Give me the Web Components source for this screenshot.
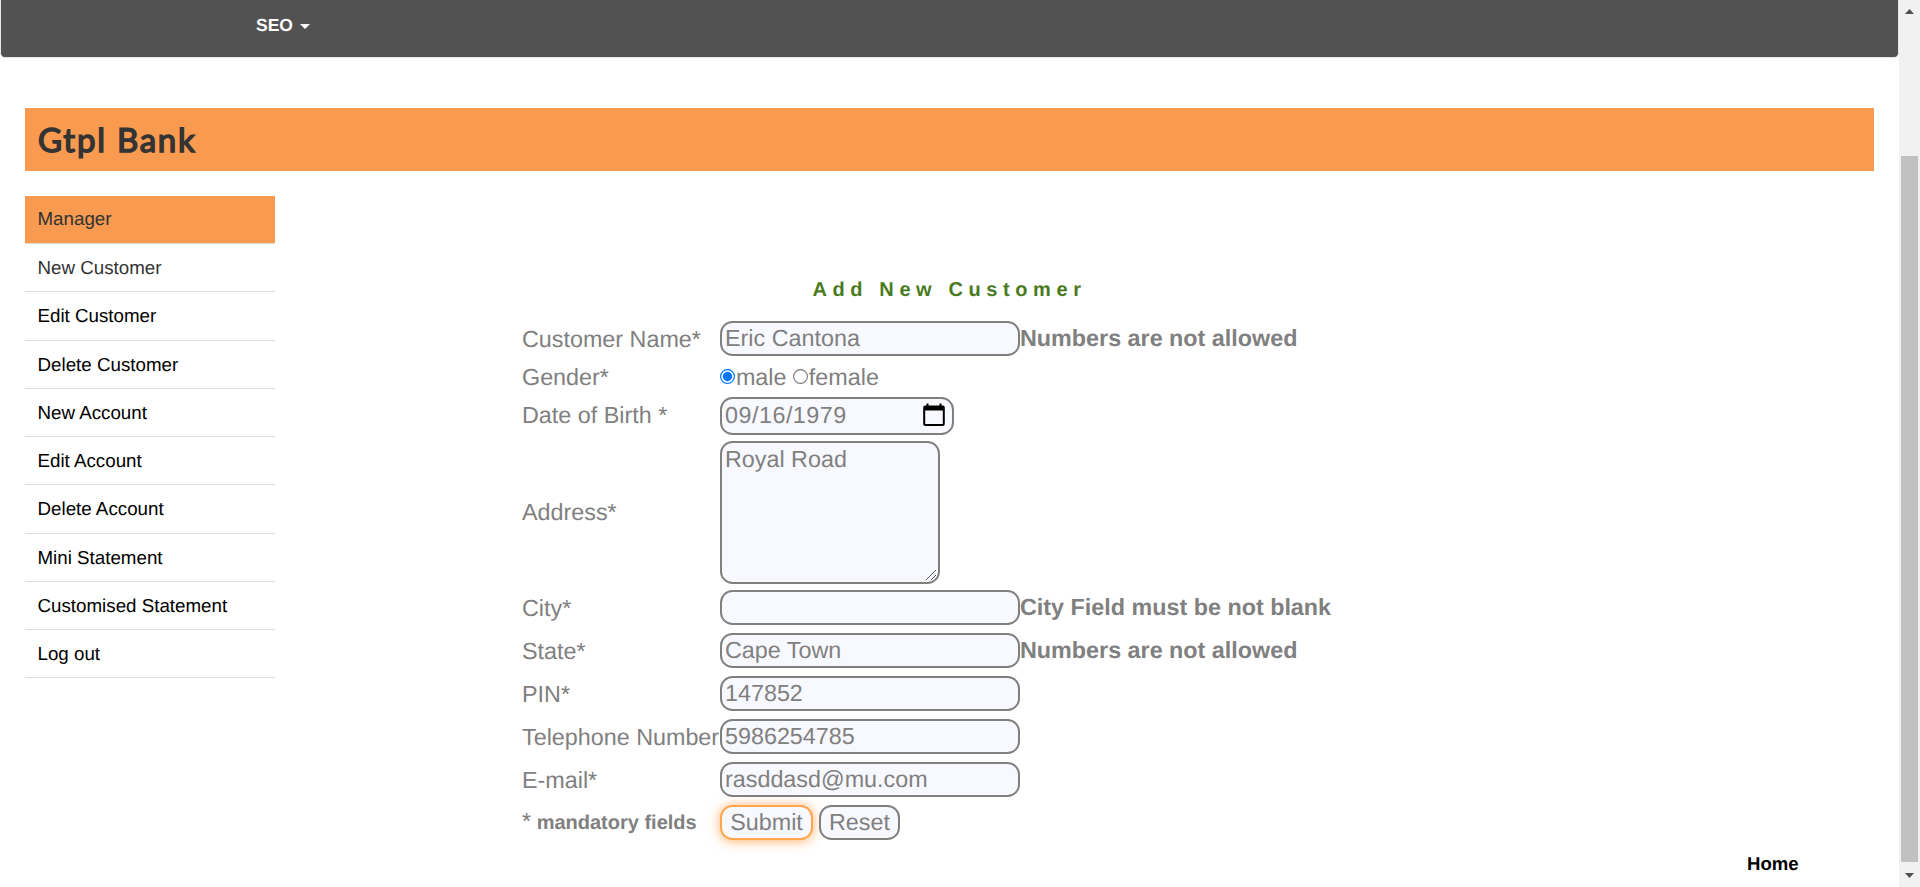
<!DOCTYPE html>
<html lang="en">
<head>
<meta charset="utf-8">
<title>Gtpl Bank New Customer Entry Page</title>
<style>
html,body{margin:0;height:100%;overflow:hidden;background:#fff}
body{font-family:"Liberation Sans",Arial,sans-serif;text-rendering:geometricPrecision}
</style>
</head>
<body>
<bank-app></bank-app>
<script>
const define=(name,html)=>customElements.define(name,class extends HTMLElement{
  constructor(){super();this.attachShadow({mode:'open'}).innerHTML=html;}
});

define('nav-bar',`<style>
:host{display:block;box-sizing:border-box;height:58px;margin:0;border:1px solid #e7e7e7;border-top:0;border-radius:0 0 5px 5px;background:#525252;color:#fff}
a{display:flex;align-items:center;gap:7px;padding:15px 0 0 255px;font-weight:bold;font-size:17.5px;line-height:20px}
i{border:5px solid transparent;border-top-color:#fff;border-bottom:0;margin-top:3px}
</style><a><span><slot></slot></span><i></i></a>`);

define('bank-title',`<style>
:host{display:flex;align-items:center;box-sizing:border-box;margin:50px 25px 0;height:63px;padding:0 0 0 13px;background:#f89a50;color:#333}
h2{margin:0;font:400 33px/40px Lato,sans-serif;letter-spacing:1.75px;-webkit-text-stroke:1.5px #333}
</style><h2><slot></slot></h2>`);

define('menu-item',`<style>
:host{display:block;box-sizing:border-box;height:48.22px;padding:10px 12.5px;border-bottom:1px solid #ddd;font-size:18.75px;line-height:27px;color:#000;white-space:nowrap}
:host([active]){background:#f89a50;color:#333;line-height:26.6px}
:host([hover]){color:#333}
</style><slot></slot>`);

define('side-menu',`<style>:host{display:block;width:250px;flex:none}</style><slot></slot>`);

define('form-row',`<style>
:host{display:grid;grid-template-columns:198px auto 1fr;align-items:center;height:43px;font-size:23.33px;line-height:27px;color:gray;white-space:nowrap}
:host([kind=radio]){height:32px}
:host([kind=date]){height:44px}
:host([kind=area]){height:150px}
.l{padding-top:1px}
:host([kind=radio]) .l{padding-top:2px}
:host([kind=date]) .l{padding-top:2px}
:host([kind=area]) .l{padding-top:3px}
b{font-weight:bold}
</style><span class="l"><slot name="label"></slot></span><slot></slot><b><slot name="message"></slot></b>`);

define('text-box',`<style>
:host{display:flex;box-sizing:border-box;width:300px;height:35px;border:2px solid gray;border-radius:12.5px;background:#f8f8ff;padding:2px 3px 0 3px;line-height:27px;position:relative}
:host([kind=date]){width:234px;height:38px;margin-top:4px;padding-top:3px;justify-content:space-between;letter-spacing:.5px}
:host([kind=area]){width:220px;height:143px;margin-top:3px;padding-top:3px}
svg{display:none}
:host([kind=date]) .cal{display:block;margin:1px 4px 0 0}
:host([kind=area]) .grip{display:block;position:absolute;right:1px;bottom:1px}
</style><slot></slot>
<svg class="cal" width="22" height="24" viewBox="0 0 22 24"><path d="M2.2 2.5h17.6q2 0 2 2v16.500q0 2-2 2h-17.6q-2 0-2-2v-16.500q0-2 2-2zM2.200 7.500v13.500h17.600v-13.500z" fill="#000" fill-rule="evenodd"/><path d="M4.500 0.500v3M17.500 .5v3" stroke="#000" stroke-width="2"/></svg>
<svg class="grip" width="12" height="12" viewBox="0 0 12 12"><path d="M1 11L11 1M6 11L11 6" stroke="#555" stroke-width="1"/></svg>`);

define('gender-choice',`<style>
:host{display:flex;align-items:center;padding-top:2px}
svg{width:15px;height:15px;margin:-1px .9px 0 0}
span+svg{margin-left:6.5px}
</style><svg viewBox="0 0 15 15"><circle cx="7.5" cy="7.5" r="6.9" fill="#fff" stroke="#0075ff" stroke-width="1.2"/><circle cx="7.5" cy="7.5" r="4.7" fill="#0075ff"/></svg><span>male</span><svg viewBox="0 0 15 15"><circle cx="7.5" cy="7.5" r="6.9" fill="#fff" stroke="#767676" stroke-width="1.1"/></svg><span>female</span>`);

define('form-button',`<style>
:host{display:flex;justify-content:center;box-sizing:border-box;width:81px;height:35px;border:2px solid gray;border-radius:12.5px;background:#f8f8ff;padding-top:2px;line-height:27px}
:host([focused]){width:93px;border-color:#ffa64d;box-shadow:0 1px 12px rgba(255,150,50,.75)}
</style><slot></slot>`);

define('button-group',`<style>:host{display:flex;gap:6px}</style><slot></slot>`);

define('required-note',`<style>:host{display:flex;white-space:pre}i{font-style:normal;margin-top:-2px}b{font-size:20px}</style><i>*</i><b> mandatory fields</b>`);

define('customer-form',`<style>
:host{display:block;width:900px;margin-left:247px;padding-top:83px}
h3{margin:0 0 15px 290.5px;font-size:20px;line-height:23px;letter-spacing:5.6px;color:#4a7a1e}
</style><h3>Add New Customer</h3>
<form-row><span slot="label">Customer Name*</span><text-box>Eric Cantona</text-box><span slot="message">Numbers are not allowed</span></form-row>
<form-row kind="radio"><span slot="label">Gender*</span><gender-choice></gender-choice></form-row>
<form-row kind="date"><span slot="label">Date of Birth *</span><text-box kind="date">09/16/1979</text-box></form-row>
<form-row kind="area"><span slot="label">Address*</span><text-box kind="area">Royal Road</text-box></form-row>
<form-row><span slot="label">City*</span><text-box></text-box><span slot="message">City Field must be not blank</span></form-row>
<form-row><span slot="label">State*</span><text-box>Cape Town</text-box><span slot="message">Numbers are not allowed</span></form-row>
<form-row><span slot="label">PIN*</span><text-box>147852</text-box></form-row>
<form-row><span slot="label">Telephone Number</span><text-box>5986254785</text-box></form-row>
<form-row><span slot="label">E-mail*</span><text-box>rasddasd@mu.com</text-box></form-row>
<form-row><required-note slot="label"></required-note><button-group><form-button focused>Submit</form-button><form-button>Reset</form-button></button-group></form-row>`);

define('scroll-bar',`<style>
:host{display:flex;flex-direction:column;align-items:center;width:21px;flex:none;background:#f1f1f1;box-sizing:border-box;height:100%}
svg{display:block;width:9px;height:5px;margin:9px 0 0}
i{width:17px;height:706px;background:#c1c1c1;margin:142px 0 2px}
</style><svg viewBox="0 0 9 5"><path d="M0 5L4.5 0L9 5z" fill="#505050"/></svg><i></i><svg viewBox="0 0 9 5"><path d="M0 0L4.5 5L9 0z" fill="#505050"/></svg>`);

define('home-link',`<style>:host{display:block;padding:9px 0 0 1747px;font-weight:bold;font-size:18.6px;line-height:22px;color:#000}</style><slot></slot>`);

define('bank-app',`<style>
:host{display:flex;height:887px;overflow:hidden}
main{flex:1;min-width:0}
.content{display:flex;margin:25px 25px 0}
</style><main><nav-bar>SEO</nav-bar><bank-title>Gtpl Bank</bank-title>
<div class="content"><side-menu>
<menu-item active>Manager</menu-item><menu-item hover>New Customer</menu-item><menu-item>Edit Customer</menu-item><menu-item>Delete Customer</menu-item><menu-item>New Account</menu-item><menu-item>Edit Account</menu-item><menu-item>Delete Account</menu-item><menu-item>Mini Statement</menu-item><menu-item>Customised Statement</menu-item><menu-item>Log out</menu-item>
</side-menu><customer-form></customer-form></div><home-link>Home</home-link></main><scroll-bar></scroll-bar>`);
</script>
</body>
</html>
